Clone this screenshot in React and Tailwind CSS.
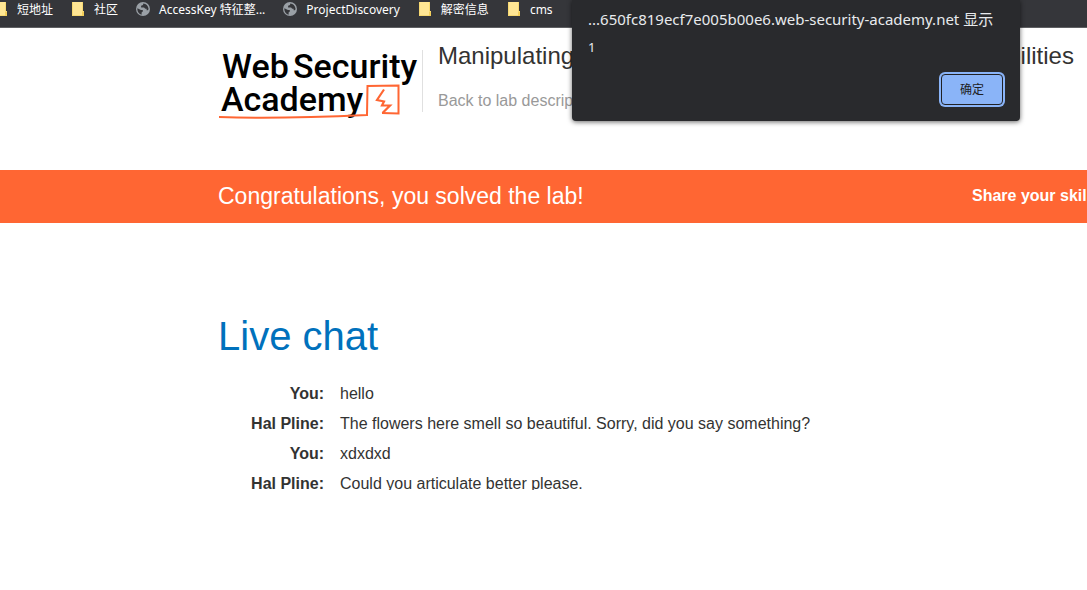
const bookmarks = [
  { label: "短地址", kind: "folder" },
  { label: "社区", kind: "folder" },
  { label: "AccessKey 特征整...", kind: "globe" },
  { label: "ProjectDiscovery", kind: "globe" },
  { label: "解密信息", kind: "folder" },
  { label: "cms", kind: "folder" },
];

const messages = [
  { from: "You:", text: "hello" },
  { from: "Hal Pline:", text: "The flowers here smell so beautiful. Sorry, did you say something?" },
  { from: "You:", text: "xdxdxd" },
  { from: "Hal Pline:", text: "Could you articulate better please." },
];

function FolderIcon() {
  return (
    <svg className="h-4 w-4 shrink-0" viewBox="0 0 16 16" aria-hidden="true">
      <path d="M2 1h11v9h1v5H2z" fill="#ffe694" />
      <path d="M2 1h1v14H2zM2 14h12v1H2zM12 1h1v9h-1z" fill="#f7d972" />
      <path d="M12 10.500h2V15h-2z" fill="#f4cf5a" />
    </svg>
  );
}

function GlobeIcon() {
  return (
    <svg className="h-4 w-4 shrink-0" viewBox="0 0 16 16" aria-hidden="true">
      <circle cx="8" cy="8" r="7" fill="#9aa0a6" />
      <path
        d="M2.4 7.2 6 9.1 7.8 9v1.4l-1.2 1.1v2.3C4.2 13.2 2.3 11 2.3 8zM8.3 2.4 8 4 6.1 4.8v1.6H9l1.3 1.4h1.3v1.5h1.2c.6-.5.8-1.1.7-1.8C13.2 4.800 11.100 2.600 8.300 2.400z"
        fill="#35363a"
      />
    </svg>
  );
}

function Logo() {
  return (
    <a href="#academy" aria-label="Web Security Academy" className="block h-20 w-[204px] shrink-0 text-black">
      <svg className="h-20 w-[204px]" viewBox="0 0 204 80" aria-hidden="true">
        <text x="4" y="38" fontFamily="Roboto, sans-serif" fontSize="34" fontWeight="500">Web</text>
        <text x="75" y="38" fontFamily="Roboto, sans-serif" fontSize="34" fontWeight="500">Security</text>
        <text x="3" y="71" fontFamily="Roboto, sans-serif" fontSize="34" fontWeight="500">Academy</text>
        <g fill="none" stroke="#ff6633" strokeWidth="2">
          <path d="M1 77 Q60 79 149 75 L149.500 46 L180.500 45.500 L180.500 73.500 L164 73" />
          <path d="M166 49.500 159 60 166 61.500 164 65.500 172 65.500 164.500 73" strokeWidth="2.200" />
        </g>
      </svg>
    </a>
  );
}

function Dialog() {
  return (
    <section
      role="dialog"
      aria-labelledby="alert-title"
      className="absolute right-[67px] top-0 flex h-[121px] w-[448px] flex-col rounded-b bg-[#292a2d] px-4 pt-[7px] pb-4 font-['Noto_Sans','Noto_Sans_CJK_SC',sans-serif] text-[#e8eaed] shadow-[0_1px_5px_rgba(0,0,0,0.6)]"
    >
      <h2 id="alert-title" className="whitespace-nowrap text-[15px] leading-6">
        ...650fc819ecf7e005b00e6.web-security-academy.net 显示
      </h2>
      <p className="mt-1 text-[13px] leading-6">1</p>
      <button
        type="button"
        className="mr-px mt-auto h-[31px] w-[62px] self-end rounded-sm border border-[#202124] bg-[#8ab4f8] text-xs text-[#202124] ring-2 ring-[#8ab4f8]"
      >
        确定
      </button>
    </section>
  );
}

export default function App() {
  return (
    <div className="relative min-h-screen overflow-hidden bg-white font-['Liberation_Sans',Arial,sans-serif] text-[#333332]">
      <nav className="h-7 overflow-hidden border-b border-[#5f6063] bg-[#35363a] font-['Noto_Sans','Noto_Sans_CJK_SC',sans-serif] text-xs leading-5 text-white">
        <ul className="-ml-[7px] flex gap-[17px] whitespace-nowrap">
          {bookmarks.map((item) => (
            <li key={item.label}>
              <a href="#bookmark" className="flex gap-2">
                <span className="pt-px">{item.kind === "folder" ? <FolderIcon /> : <GlobeIcon />}</span>
                {item.label}
              </a>
            </li>
          ))}
        </ul>
      </nav>

      <header className="flex h-[142px] pl-[218px] pt-3">
        <Logo />
        <div className="mt-2.5 h-[62px] border-l border-[#e0e0e0] pl-[15px]">
          <h2 className="-mt-2.5 whitespace-nowrap text-2xl leading-8">
            Manipulating WebSocket messages to exploit vulnerabilities
          </h2>
          <a href="#description" className="mt-[17px] block text-base leading-6 text-[#999999]">
            Back to lab description
          </a>
        </div>
      </header>

      <section className="flex h-[53px] items-center justify-between whitespace-nowrap bg-[#ff6633] pb-0.5 pl-[218px] text-white">
        <h4 className="text-[23px] leading-8">Congratulations, you solved the lab!</h4>
        <p className="w-[115px] text-base font-bold">Share your skills!</p>
      </section>

      <main className="pl-[218px] pt-[88px]">
        <h1 className="text-[40px] leading-[50px] text-[#0071bc]">Live chat</h1>
        <div className="mt-[18px] max-h-[111px] overflow-hidden">
          <table className="text-base leading-[30px]">
            <tbody>
              {messages.map((message, index) => (
                <tr key={index}>
                  <th scope="row" className="w-[106px] p-0 text-right font-bold">{message.from}</th>
                  <td className="py-0 pl-4">{message.text}</td>
                </tr>
              ))}
            </tbody>
          </table>
        </div>
      </main>

      <Dialog />
    </div>
  );
}
